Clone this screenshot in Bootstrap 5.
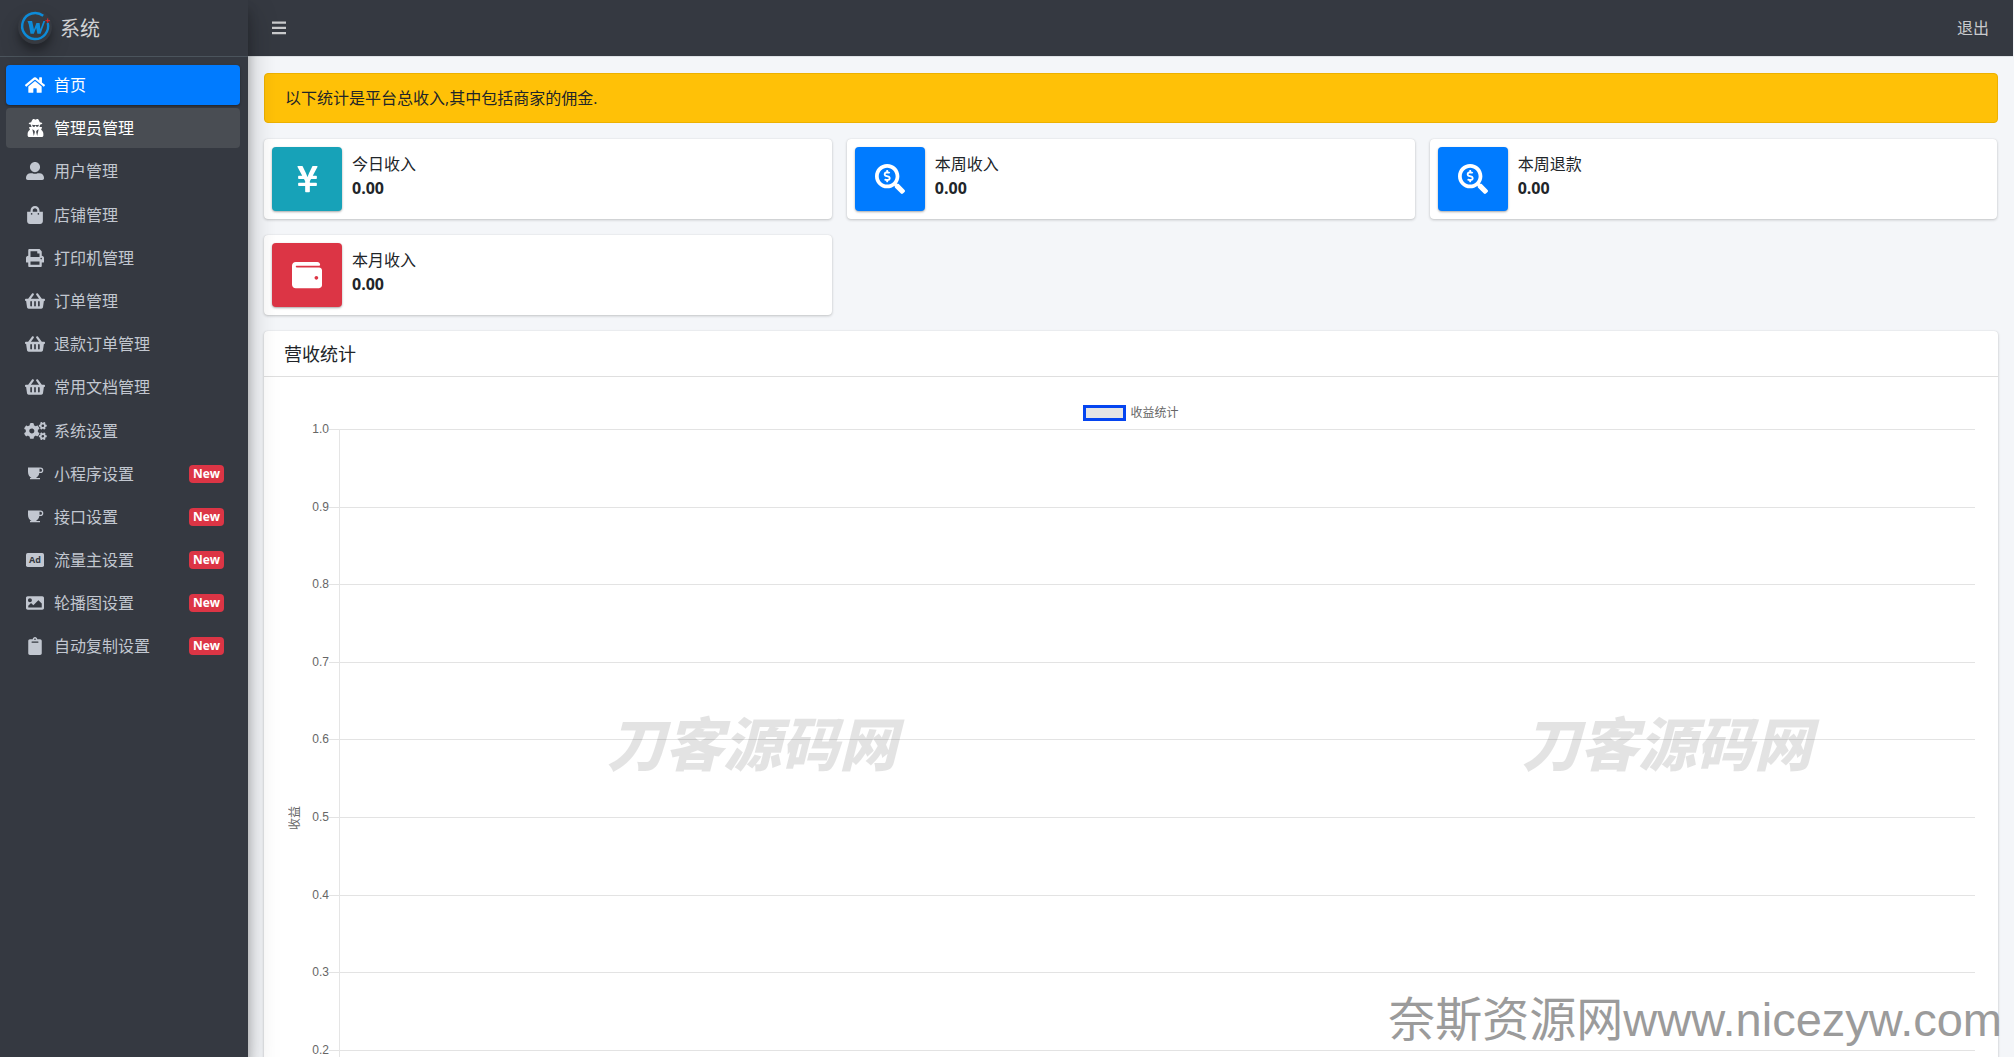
<!DOCTYPE html>
<html lang="zh-CN">
<head>
<meta charset="utf-8">
<meta name="viewport" content="width=device-width, initial-scale=1">
<title>系统</title>
<link href="https://cdn.jsdelivr.net/npm/bootstrap@5.3.0/dist/css/bootstrap.min.css" rel="stylesheet">
<style>
  :root { --panel: #353941; --panel-line: #4b545c; --page: #f4f6f9; }
  body { background: var(--page); color: #212529; font-family: "Open Sans", "Noto Sans CJK SC", sans-serif; font-size: 16px; line-height: 24px; }
  .icon { fill: currentColor; display: block; }
  a { text-decoration: none; }

  .shell { border-right: 1px solid var(--page); }
  .sidebar { width: 248px; background: var(--panel); color: #c2c7d0; z-index: 2; box-shadow: 0 14px 28px rgba(0,0,0,.25), 0 10px 10px rgba(0,0,0,.22); }
  .brand-link { height: 57px; padding: 2px 18px 0; gap: 8px; font-size: 20px; color: #d0d1d3; border-bottom: 1px solid var(--panel-line); }
  .brand-logo { width: 34px; height: 34px; margin-bottom: 4px; border-radius: 50%; box-shadow: 0 10px 20px rgba(0,0,0,.19), 0 6px 6px rgba(0,0,0,.23); }
  .side-menu { gap: 4px; padding: 8px 8px 8px 6px; }
  .side-group { gap: 3px; }
  .side-link { height: 40px; padding: 0 16px; border-radius: 4px; color: #c2c7d0; }
  .side-link:hover, .side-link.hovered { background: #494d53; color: #fff; }
  .side-link.active { background: #007bff; color: #fff; box-shadow: 0 1px 3px rgba(0,0,0,.12), 0 1px 2px rgba(0,0,0,.24); }
  .side-icon { width: 26px; margin-right: 6px; }
  .new-badge { background: #dc3545; font-size: 12px; line-height: 12px; padding: 3px 4px; border-radius: 4px; }

  .topbar { height: 57px; padding: 0 24px; background: var(--panel); border-bottom: 1px solid #dee2e6; }
  .topbar a, .topbar button { color: #c9cacc; }
  .page-body { padding: 16px 15px 16px 16px; }
  .notice { background: #ffc107; border: 1px solid #edb100; border-radius: 4px; padding: 12px 20px; margin-bottom: 16px; }
  .stat-row { --bs-gutter-x: 15px; --bs-gutter-y: 16px; margin-bottom: 16px; margin-right: -7px; }
  .panel { background: #fff; border-radius: 4px; box-shadow: 0 0 1px rgba(0,0,0,.125), 0 1px 3px rgba(0,0,0,.2); }
  .stat { padding: 8px; gap: 10px; }
  .stat-icon { width: 70px; height: 64px; border-radius: 4px; color: #fff; box-shadow: 0 1px 3px rgba(0,0,0,.12), 0 1px 2px rgba(0,0,0,.24); }
  .stat-text { padding-top: 5px; }
  .bg-teal { background: #17a2b8; } .bg-blue { background: #007bff; } .bg-red { background: #dc3545; }
  .panel-head { padding: 11px 20px 10px; border-bottom: 1px solid #dfdfdf; }
  .panel-head h2 { font-size: 18px; line-height: 24px; margin: 0; font-weight: 400; }

  .chart { padding: 28px 23px 40px 23px; font: 12px/16px "Liberation Sans", "Noto Sans CJK SC", sans-serif; color: #666; }
  .legend-row { gap: 4px; margin-bottom: 8px; }
  .legend-box { width: 43px; height: 16px; border: 3px solid #0545f0; background: #e5e5e5; }
  .plot { height: 777px; }
  .axis-title { writing-mode: vertical-rl; text-orientation: sideways; transform: rotate(180deg); text-align: center; width: 16px; }
  .axis-labels { width: 26px; }
  .axis-labels span { height: 1px; line-height: 0; text-align: right; }
  .grid-lines::before { content: ""; position: absolute; left: 10px; top: 0; bottom: 0; width: 1px; background: #e5e5e5; }
  .grid-lines i { height: 1px; background: #e3e3e3; }

  .watermark { position: absolute; white-space: nowrap; pointer-events: none; z-index: 3; }
  .mark-source { top: 705px; font: italic 900 58px/72px "Noto Sans CJK SC", sans-serif; color: rgba(0,0,0,.11); }
  .mark-a { left: 607px; }
  .mark-b { left: 1522px; }
  .mark-site { right: 11px; bottom: 5px; font: 47px/64px "Liberation Sans", "Noto Sans CJK SC", sans-serif; color: #9b9b9b; }
</style>
<script src="https://cdn.jsdelivr.net/npm/bootstrap@5.3.0/dist/js/bootstrap.bundle.min.js"></script>
</head>
<body>
<svg class="d-none" aria-hidden="true">
  <symbol id="i-basket" viewBox="0 0 576 512"><path d="M576 216v16c0 13.255-10.745 24-24 24h-8l-26.113 182.788C514.509 462.435 494.257 480 470.37 480H105.63c-23.887 0-44.139-17.565-47.518-41.212L32 256h-8c-13.255 0-24-10.745-24-24v-16c0-13.255 10.745-24 24-24h67.341l106.78-146.821c10.395-14.292 30.407-17.453 44.701-7.058 14.293 10.395 17.453 30.408 7.058 44.701L170.477 192h235.046L326.12 82.821c-10.395-14.292-7.234-34.306 7.059-44.701 14.291-10.395 34.306-7.235 44.701 7.058L484.659 192H552c13.255 0 24 10.745 24 24zM312 392V280c0-13.255-10.745-24-24-24s-24 10.745-24 24v112c0 13.255 10.745 24 24 24s24-10.745 24-24zm112 0V280c0-13.255-10.745-24-24-24s-24 10.745-24 24v112c0 13.255 10.745 24 24 24s24-10.745 24-24zm-224 0V280c0-13.255-10.745-24-24-24s-24 10.745-24 24v112c0 13.255 10.745 24 24 24s24-10.745 24-24z"/></symbol>
  <symbol id="i-cup" viewBox="0 0 18 18"><path fill-rule="evenodd" d="M2 2.500h12.500a2.800 2.800 0 0 1 0 5.600h-1.200C13 10.500 11.500 12 10 13h4v1.300H4V13h1.500C3.500 12 2 10 2 7zM13.500 3.800v3h1a1.500 1.500 0 0 0 0-3z"/></symbol>
  <symbol id="i-find" viewBox="0 0 512 512"><path d="M505.04 442.66l-99.71-99.69c-4.5-4.5-10.6-7-17-7h-16.3c27.6-35.3 44-79.69 44-127.99C416.03 93.09 322.92 0 208.02 0S0 93.09 0 207.98s93.11 207.98 208.02 207.98c48.3 0 92.71-16.4 128.01-44v16.3c0 6.4 2.5 12.5 7 17l99.71 99.69c9.4 9.4 24.6 9.4 33.9 0l28.3-28.3c9.4-9.4 9.4-24.59.1-33.99zm-297.02-90.7c-79.54 0-144-64.34-144-143.98 0-79.53 64.35-143.98 144-143.98 79.54 0 144 64.34 144 143.98 0 79.53-64.35 143.98-144 143.98zm27.11-152.54l-45.01-13.5c-5.16-1.55-8.77-6.78-8.77-12.73 0-7.27 5.3-13.19 11.8-13.19h28.11c4.56 0 8.96 1.29 12.82 3.72 3.24 2.03 7.36 1.91 10.13-.73l11.75-11.21c3.53-3.37 3.33-9.21-.57-12.14-9.1-6.83-20.08-10.77-31.37-11.35V112c0-4.42-3.58-8-8-8h-16c-4.42 0-8 3.58-8 8v16.12c-23.63.63-42.68 20.55-42.68 45.07 0 19.97 12.99 37.81 31.58 43.39l45.01 13.5c5.16 1.55 8.77 6.78 8.77 12.73 0 7.27-5.3 13.19-11.8 13.19h-28.1c-4.56 0-8.96-1.29-12.82-3.72-3.24-2.03-7.36-1.91-10.13.73l-11.75 11.21c-3.53 3.37-3.33 9.21.57 12.14 9.1 6.83 20.08 10.77 31.37 11.35V304c0 4.42 3.58 8 8 8h16c4.42 0 8-3.58 8-8v-16.12c23.63-.63 42.68-20.54 42.68-45.07 0-19.97-12.99-37.81-31.59-43.39z"/></symbol>
  <symbol id="i-gear" viewBox="410 0 230 212" overflow="visible"><path d="M512.1 191l-8.2 14.3c-3 5.3-9.4 7.5-15.1 5.4-11.800-4.400-22.600-10.700-32.100-18.600-4.600-3.800-5.800-10.500-2.800-15.700l8.200-14.300c-6.900-8-12.300-17.300-15.900-27.400h-16.500c-6 0-11.200-4.300-12.200-10.300-2-12-2.100-24.600 0-37.100 1-6 6.200-10.400 12.200-10.400h16.500c3.600-10.100 9-19.400 15.900-27.400l-8.200-14.300c-3-5.200-1.900-11.900 2.800-15.700 9.500-7.900 20.400-14.200 32.100-18.600 5.700-2.100 12.100.1 15.100 5.400l8.200 14.300c10.500-1.900 21.200-1.900 31.700 0L552 6.300c3-5.300 9.400-7.500 15.100-5.400 11.800 4.400 22.600 10.700 32.100 18.600 4.600 3.800 5.800 10.500 2.800 15.700l-8.200 14.300c6.900 8 12.300 17.300 15.900 27.400h16.500c6 0 11.200 4.300 12.200 10.300 2 12 2.100 24.600 0 37.100-1 6-6.200 10.400-12.200 10.400h-16.500c-3.600 10.100-9 19.400-15.900 27.400l8.200 14.300c3 5.200 1.900 11.900-2.800 15.700-9.500 7.900-20.400 14.200-32.100 18.600-5.700 2.100-12.100-.1-15.100-5.400l-8.200-14.300c-10.400 1.900-21.200 1.900-31.700 0zm-10.500-58.800c38.500 29.600 82.400-14.300 52.800-52.800-38.500-29.700-82.400 14.300-52.800 52.800z"/></symbol>
</svg>

<div class="shell d-flex vh-100 overflow-hidden position-relative">
  <aside class="sidebar flex-shrink-0 position-relative">
    <a href="#" class="brand-link d-flex align-items-center">
      <span class="brand-logo flex-shrink-0">
        <svg class="icon" width="34" height="34" viewBox="0 0 34 34">
          <circle cx="17" cy="17" r="16.500" fill="#373a40"/>
          <path d="M25.200 5.800A13 13 0 1 0 29.800 13" fill="none" stroke="#0d8bd8" stroke-width="2.400"/>
          <path d="M9 9.800h4.600l1.900 8.400 2.400-6.300h3.200l.800 6.200 3-8.300 1.800 0-4.600 12.700h-3.200l-1.200-5.800-2.400 5.800h-3.300L10.200 13z" fill="#0d8bd8" transform="translate(.5 1.200)"/>
          <path d="M29.700 8.400v4.600M27.400 10.700H32" stroke="#e0262d" stroke-width="1"/>
        </svg>
      </span>
      <span>系统</span>
    </a>
    <nav class="side-menu d-flex flex-column">
      <div class="side-group d-flex flex-column">
        <a href="#" class="side-link active d-flex align-items-center"><span class="side-icon d-flex justify-content-center"><svg class="icon" width="20" height="18" viewBox="0 0 576 512"><path d="M280.37 148.26L96 300.11V464a16 16 0 0 0 16 16l112.06-.29a16 16 0 0 0 15.92-16V368a16 16 0 0 1 16-16h64a16 16 0 0 1 16 16v95.64a16 16 0 0 0 16 16.05L464 480a16 16 0 0 0 16-16V300L295.67 148.26a12.19 12.19 0 0 0-15.3 0zM571.6 251.47L488 182.56V44.05a12 12 0 0 0-12-12h-56a12 12 0 0 0-12 12v72.61L318.47 43a48 48 0 0 0-61 0L4.34 251.47a12 12 0 0 0-1.6 16.9l25.5 31A12 12 0 0 0 45.15 301l235.22-193.74a12.19 12.19 0 0 1 15.3 0L530.9 301a12 12 0 0 0 16.9-1.6l25.5-31a12 12 0 0 0-1.7-16.93z"/></svg></span><span>首页</span></a>
        <a href="#" class="side-link hovered d-flex align-items-center"><span class="side-icon d-flex justify-content-center"><svg class="icon" width="17" height="18" viewBox="0 0 448 512"><path d="M383.9 308.3l23.9-62.6c4-10.5-3.7-21.7-15-21.7h-58.5c11-18.9 17.8-40.6 17.8-64v-.3c39.2-7.8 64-19.1 64-31.7 0-13.3-27.3-25.1-70.1-33-9.2-32.8-27-65.8-40.6-82.8-9.5-11.9-25.9-15.6-39.5-8.8l-27.6 13.8c-9 4.5-19.6 4.5-28.6 0L182.1 3.4c-13.6-6.8-30-3.1-39.5 8.8-13.5 17-31.4 50-40.6 82.8-42.7 7.9-70 19.7-70 33 0 12.6 24.8 23.9 64 31.7v.3c0 23.4 6.8 45.1 17.8 64H56.300c-11.500 0-19.200 11.700-14.700 22.300l25.800 60.200C27.300 329.800 0 372.700 0 422.400v44.800C0 491.900 20.100 512 44.800 512h358.400c24.700 0 44.800-20.100 44.800-44.800v-44.800c0-48.400-25.800-90.400-64.100-114.100zM176 480l-41.600-192 49.600 32 24 40-32 120zm96 0l-32-120 24-40 49.600-32L272 480zm41.700-298.500c-3.900 11.900-7 24.600-16.500 33.400-10.100 9.300-48 22.400-64-25-2.800-8.400-15.400-8.400-18.300 0-17 50.200-56 32.400-64 25-9.500-8.800-12.700-21.500-16.500-33.400-.8-2.500-6.300-5.700-6.300-5.800v-10.800c28.300 3.600 61 5.800 96 5.800s67.700-2.100 96-5.800v10.800c-.1.1-5.600 3.200-6.400 5.800z"/></svg></span><span>管理员管理</span></a>
        <a href="#" class="side-link d-flex align-items-center"><span class="side-icon d-flex justify-content-center"><svg class="icon" width="18" height="18" viewBox="0 0 512 512"><path d="M256 288c79.500 0 144-64.500 144-144S335.500 0 256 0 112 64.500 112 144s64.500 144 144 144zm128 32h-55.100c-22.200 10.200-46.900 16-72.900 16s-50.600-5.800-72.900-16H128C57.300 320 0 377.300 0 448v16c0 26.500 21.500 48 48 48h416c26.500 0 48-21.500 48-48v-16c0-70.700-57.300-128-128-128z"/></svg></span><span>用户管理</span></a>
      </div>
      <div class="side-group d-flex flex-column">
        <a href="#" class="side-link d-flex align-items-center"><span class="side-icon d-flex justify-content-center"><svg class="icon" width="16" height="18" viewBox="0 0 448 512"><path d="M352 160v-32C352 57.420 294.579 0 224 0 153.420 0 96 57.420 96 128v32H0v272c0 44.183 35.817 80 80 80h288c44.183 0 80-35.817 80-80V160h-96zm-192-32c0-35.290 28.710-64 64-64s64 28.710 64 64v32H160v-32zm160 120c-13.255 0-24-10.745-24-24s10.745-24 24-24 24 10.745 24 24-10.745 24-24 24zm-192 0c-13.255 0-24-10.745-24-24s10.745-24 24-24 24 10.745 24 24-10.745 24-24 24z"/></svg></span><span>店铺管理</span></a>
        <a href="#" class="side-link d-flex align-items-center"><span class="side-icon d-flex justify-content-center"><svg class="icon" width="18" height="18" viewBox="0 0 512 512"><path d="M448 192V77.250c0-8.490-3.370-16.620-9.370-22.630L393.370 9.370c-6-6-14.140-9.370-22.630-9.370H96C78.330 0 64 14.330 64 32v160c-35.350 0-64 28.650-64 64v112c0 8.840 7.160 16 16 16h48v96c0 17.670 14.330 32 32 32h320c17.670 0 32-14.330 32-32v-96h48c8.840 0 16-7.160 16-16V256c0-35.350-28.650-64-64-64zm-64 256H128v-96h256v96zm0-224H128V64h192v48c0 8.840 7.160 16 16 16h48v96zm48 72c-13.250 0-24-10.750-24-24 0-13.260 10.750-24 24-24s24 10.740 24 24c0 13.250-10.750 24-24 24z"/></svg></span><span>打印机管理</span></a>
        <a href="#" class="side-link d-flex align-items-center"><span class="side-icon d-flex justify-content-center"><svg class="icon" width="20" height="18"><use href="#i-basket"/></svg></span><span>订单管理</span></a>
        <a href="#" class="side-link d-flex align-items-center"><span class="side-icon d-flex justify-content-center"><svg class="icon" width="20" height="18"><use href="#i-basket"/></svg></span><span>退款订单管理</span></a>
        <a href="#" class="side-link d-flex align-items-center"><span class="side-icon d-flex justify-content-center"><svg class="icon" width="20" height="18"><use href="#i-basket"/></svg></span><span>常用文档管理</span></a>
      </div>
      <div class="side-group d-flex flex-column">
        <a href="#" class="side-link d-flex align-items-center"><span class="side-icon d-flex justify-content-center"><svg class="icon" width="23" height="18" viewBox="0 0 640 512"><use href="#i-gear" x="410" y="0" width="230" height="212"/><use href="#i-gear" x="410" y="299" width="230" height="212"/><path d="M386.300 286.100l33.700 16.800c10.100 5.800 14.500 18.100 10.500 29.100-8.900 24.200-26.400 46.400-42.600 65.800-7.400 8.900-20.200 11.100-30.300 5.300l-29.100-16.800c-16 13.700-34.600 24.600-54.900 31.700v33.600c0 11.600-8.300 21.600-19.700 23.600-24.600 4.200-50.400 4.400-75.900 0-11.500-2-20-11.900-20-23.600V418c-20.300-7.200-38.900-18-54.900-31.700L74 403c-10 5.800-22.900 3.600-30.300-5.300-16.200-19.400-33.300-41.600-42.200-65.700-4-10.900.4-23.200 10.500-29.100l33.300-16.800c-3.900-20.900-3.900-42.400 0-63.400L12 205.800c-10.100-5.800-14.600-18.100-10.500-29 8.900-24.200 26-46.400 42.200-65.800 7.400-8.900 20.200-11.100 30.300-5.300l29.100 16.800c16-13.700 34.600-24.600 54.900-31.700V57.100c0-11.500 8.200-21.500 19.600-23.500 24.600-4.200 50.500-4.400 76-.1 11.500 2 20 11.900 20 23.600v33.600c20.300 7.200 38.900 18 54.900 31.700l29.100-16.800c10-5.800 22.900-3.600 30.300 5.300 16.200 19.400 33.200 41.600 42.100 65.800 4 10.900.1 23.200-10 29.100l-33.700 16.800c3.900 21 3.900 42.500 0 63.500zm-117.600 21.100c59.200-77-28.700-164.900-105.700-105.700-59.200 77 28.700 164.900 105.700 105.700z"/></svg></span><span>系统设置</span></a>
        <a href="#" class="side-link d-flex align-items-center"><span class="side-icon d-flex justify-content-center"><svg class="icon" width="18" height="18"><use href="#i-cup"/></svg></span><span>小程序设置</span><span class="badge new-badge ms-auto">New</span></a>
        <a href="#" class="side-link d-flex align-items-center"><span class="side-icon d-flex justify-content-center"><svg class="icon" width="18" height="18"><use href="#i-cup"/></svg></span><span>接口设置</span><span class="badge new-badge ms-auto">New</span></a>
        <a href="#" class="side-link d-flex align-items-center"><span class="side-icon d-flex justify-content-center"><svg class="icon" width="18" height="18" viewBox="0 0 18 18"><rect y="2" width="18" height="14" rx="1.700"/><text x="9" y="12" text-anchor="middle" font-size="9" font-weight="700" fill="#353941">Ad</text></svg></span><span>流量主设置</span><span class="badge new-badge ms-auto">New</span></a>
        <a href="#" class="side-link d-flex align-items-center"><span class="side-icon d-flex justify-content-center"><svg class="icon" width="18" height="18" viewBox="0 0 512 512"><path d="M464 448H48c-26.510 0-48-21.490-48-48V112c0-26.510 21.490-48 48-48h416c26.510 0 48 21.490 48 48v288c0 26.510-21.490 48-48 48zM112 120c-30.928 0-56 25.072-56 56s25.072 56 56 56 56-25.072 56-56-25.072-56-56-56zM64 384h384V272l-87.515-87.515c-4.686-4.686-12.284-4.686-16.971 0L208 320l-55.515-55.515c-4.686-4.686-12.284-4.686-16.971 0L64 336v48z"/></svg></span><span>轮播图设置</span><span class="badge new-badge ms-auto">New</span></a>
        <a href="#" class="side-link d-flex align-items-center"><span class="side-icon d-flex justify-content-center"><svg class="icon" width="14" height="18" viewBox="0 0 384 512"><path d="M384 112v352c0 26.510-21.490 48-48 48H48c-26.510 0-48-21.490-48-48V112c0-26.510 21.490-48 48-48h80c0-35.290 28.710-64 64-64s64 28.710 64 64h80c26.510 0 48 21.490 48 48zM192 40c-13.255 0-24 10.745-24 24s10.745 24 24 24 24-10.745 24-24-10.745-24-24-24m96 114v-20a6 6 0 0 0-6-6H102a6 6 0 0 0-6 6v20a6 6 0 0 0 6 6h180a6 6 0 0 0 6-6z"/></svg></span><span>自动复制设置</span><span class="badge new-badge ms-auto">New</span></a>
      </div>
    </nav>
  </aside>

  <div class="flex-grow-1">
    <header class="topbar d-flex align-items-center justify-content-between">
      <button type="button" class="btn p-0 border-0" aria-label="菜单"><svg class="icon" width="14" height="16" viewBox="0 0 14 16"><path d="M0 1.500h14v2.300H0zM0 6.800h14v2.300H0zM0 12h14v2.300H0z"/></svg></button>
      <a href="#">退出</a>
    </header>
    <main class="page-body">
      <div class="notice" role="alert">以下统计是平台总收入,其中包括商家的佣金.</div>
      <div class="row stat-row row-cols-3">
        <div class="col"><div class="panel stat d-flex"><span class="stat-icon bg-teal d-flex align-items-center justify-content-center"><svg class="icon" width="23" height="30" viewBox="0 0 384 512"><path d="M351.200 32h-65.300c-4.600 0-8.800 2.600-10.800 6.700l-55.400 113.200c-14.500 34.700-27.100 71.900-27.100 71.900h-1.300s-12.600-37.200-27.100-71.900L108.800 38.700c-2-4.100-6.200-6.700-10.800-6.700H32.800c-9.100 0-14.800 9.700-10.600 17.600L102.300 200H44c-6.600 0-12 5.400-12 12v32c0 6.600 5.400 12 12 12h88.200l19.800 37.200V320H44c-6.600 0-12 5.400-12 12v32c0 6.600 5.400 12 12 12h108v92c0 6.600 5.400 12 12 12h56c6.600 0 12-5.400 12-12v-92h108c6.600 0 12-5.400 12-12v-32c0-6.600-5.400-12-12-12H232v-26.800l19.800-37.200H340c6.600 0 12-5.400 12-12v-32c0-6.600-5.400-12-12-12h-58.300l80.100-150.400c4.300-7.900-1.500-17.600-10.600-17.600z"/></svg></span><div class="stat-text"><div>今日收入</div><div class="fw-bold">0.00</div></div></div></div>
        <div class="col"><div class="panel stat d-flex"><span class="stat-icon bg-blue d-flex align-items-center justify-content-center"><svg class="icon" width="30" height="30"><use href="#i-find"/></svg></span><div class="stat-text"><div>本周收入</div><div class="fw-bold">0.00</div></div></div></div>
        <div class="col"><div class="panel stat d-flex"><span class="stat-icon bg-blue d-flex align-items-center justify-content-center"><svg class="icon" width="30" height="30"><use href="#i-find"/></svg></span><div class="stat-text"><div>本周退款</div><div class="fw-bold">0.00</div></div></div></div>
        <div class="col"><div class="panel stat d-flex"><span class="stat-icon bg-red d-flex align-items-center justify-content-center"><svg class="icon" width="30" height="30" viewBox="0 0 512 512"><path d="M461.200 128H80c-8.840 0-16-7.160-16-16s7.160-16 16-16h384c8.840 0 16-7.160 16-16 0-26.510-21.490-48-48-48H64C28.650 32 0 60.650 0 96v320c0 35.350 28.650 64 64 64h397.200c28.020 0 50.800-21.530 50.800-48V176c0-26.470-22.780-48-50.800-48zM416 336c-17.670 0-32-14.330-32-32s14.330-32 32-32 32 14.330 32 32-14.330 32-32 32z"/></svg></span><div class="stat-text"><div>本月收入</div><div class="fw-bold">0.00</div></div></div></div>
      </div>
      <section class="panel">
        <div class="panel-head"><h2>营收统计</h2></div>
        <div class="chart">
          <div class="legend-row d-flex align-items-center justify-content-center"><span class="legend-box"></span><span>收益统计</span></div>
          <div class="plot d-flex">
            <div class="axis-title">收益</div>
            <div class="axis-labels d-flex flex-column justify-content-between"><span>1.0</span><span>0.9</span><span>0.8</span><span>0.7</span><span>0.6</span><span>0.5</span><span>0.4</span><span>0.3</span><span>0.2</span><span>0.1</span><span>0</span></div>
            <div class="grid-lines flex-grow-1 position-relative d-flex flex-column justify-content-between"><i></i><i></i><i></i><i></i><i></i><i></i><i></i><i></i><i></i><i></i><i></i></div>
          </div>
        </div>
      </section>
    </main>
  </div>

  <div class="watermark mark-source mark-a">刀客源码网</div>
  <div class="watermark mark-source mark-b">刀客源码网</div>
  <div class="watermark mark-site">奈斯资源网www.nicezyw.com</div>
</div>
</body>
</html>
